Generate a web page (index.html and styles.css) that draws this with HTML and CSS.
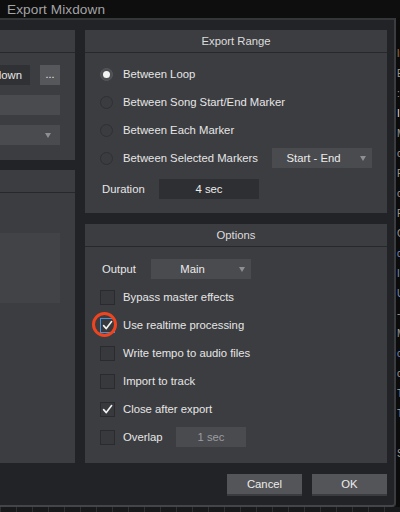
FILE: index.html
```html
<!DOCTYPE html>
<html>
<head>
<meta charset="utf-8">
<link rel="stylesheet" href="styles.css">
</head>
<body>
<div class="titlebar"><span class="title">Export Mixdown</span></div>
<div class="main">
  <div class="dialog">
    <div class="columns">
      <div class="col-left">
        <div class="panel panel-file">
          <div class="panel-head"></div>
          <div class="left-body">
            <div class="lrow"><div class="namebox">Mixdown</div><div class="dots">...</div></div>
            <div class="lrow"><div class="lfield"></div></div>
            <div class="lrow"><div class="lfield ldrop"><span class="arrow"></span></div></div>
          </div>
        </div>
        <div class="panel panel-format">
          <div class="panel-head"></div>
          <div class="lbox"></div>
        </div>
      </div>
      <div class="col-right">
        <div class="panel panel-range">
          <div class="panel-head">Export Range</div>
          <div class="range-body">
            <div class="row"><span class="radio on"></span><span class="label">Between Loop</span></div>
            <div class="row"><span class="radio"></span><span class="label">Between Song Start/End Marker</span></div>
            <div class="row"><span class="radio"></span><span class="label">Between Each Marker</span></div>
            <div class="row"><span class="radio"></span><span class="label">Between Selected Markers</span><div class="drop drop-range"><span class="drop-text">Start - End</span><span class="arrow"></span></div></div>
            <div class="row row-duration"><span class="label fixlabel dur">Duration</span><div class="darkfield">4 sec</div></div>
          </div>
        </div>
        <div class="panel panel-options">
          <div class="panel-head">Options</div>
          <div class="options-body">
            <div class="row"><span class="label fixlabel out">Output</span><div class="drop drop-out"><span class="drop-text">Main</span><span class="arrow"></span></div></div>
            <div class="row"><span class="check"></span><span class="label">Bypass master effects</span></div>
            <div class="row"><span class="check focus"><svg viewBox="0 0 15 15" width="15" height="15"><path d="M3.6 7.6 L6.3 10.6 L11.6 3.6" fill="none" stroke="#f2f2f2" stroke-width="1.6" stroke-linecap="round" stroke-linejoin="round"/></svg><span class="annot"></span></span><span class="label">Use realtime processing</span></div>
            <div class="row"><span class="check"></span><span class="label">Write tempo to audio files</span></div>
            <div class="row"><span class="check"></span><span class="label">Import to track</span></div>
            <div class="row"><span class="check"><svg viewBox="0 0 15 15" width="15" height="15"><path d="M3.6 7.6 L6.3 10.6 L11.6 3.6" fill="none" stroke="#f2f2f2" stroke-width="1.6" stroke-linecap="round" stroke-linejoin="round"/></svg></span><span class="label">Close after export</span></div>
            <div class="row"><span class="check"></span><span class="label overlap">Overlap</span><div class="field-dim">1 sec</div></div>
          </div>
        </div>
      </div>
    </div>
    <div class="footer">
      <div class="btn">Cancel</div>
      <div class="btn">OK</div>
    </div>
  </div>
  <div class="backdrop">
    <span class="bl c1">ln</span>
    <span class="bl">Ev</span>
    <span class="bl">:</span>
    <span class="bl c2">Il</span>
    <span class="bl">Mi</span>
    <span class="bl">o</span>
    <span class="bl">Fa</span>
    <span class="bl">o</span>
    <span class="bl">Fx</span>
    <span class="bl">Co</span>
    <span class="bl c3">d</span>
    <span class="bl c3">II</span>
    <span class="bl c3">U</span>
    <span class="bl">-</span>
    <span class="bl">M</span>
    <span class="bl c3">o</span>
    <span class="bl">c</span>
    <span class="bl">Ti</span>
    <span class="bl">Ti</span>
    <span class="bl">&nbsp;</span>
    <span class="bl">S</span>
  </div>
</div>
<div class="ruler"></div>
</body>
</html>
```

FILE: styles.css
```css
* { box-sizing: border-box; }

html, body {
  margin: 0;
  padding: 0;
  width: 400px;
  height: 512px;
  overflow: hidden;
  background: #121314;
  font-family: "Liberation Sans", Arial, sans-serif;
  font-size: 11.3px;
  color: #e6e6e6;
}

.titlebar {
  height: 18px;
  background: #0e0e0f;
  display: flex;
  align-items: center;
  padding-left: 7px;
}

.title {
  font-size: 13.6px;
  color: #a3a3a6;
  letter-spacing: 0.1px;
}

.main {
  display: flex;
  height: 489px;
}

.dialog {
  width: 396px;
  flex-shrink: 0;
  background: #222327;
  border-top: 2px solid #35363a;
  border-right: 2px solid #3b3c40;
  border-bottom: 2px solid #44454a;
  border-bottom-right-radius: 4px;
  padding: 10px 7px 9px 0;
  display: flex;
  flex-direction: column;
}

.columns {
  display: flex;
  gap: 10px;
  height: 433px;
}

.col-left {
  flex: 1;
  display: flex;
  flex-direction: column;
  gap: 10px;
  min-width: 0;
}

.col-right {
  width: 302px;
  flex-shrink: 0;
  display: flex;
  flex-direction: column;
  gap: 11px;
}

.panel {
  background: #3c3d41;
  overflow: hidden;
}

.panel-head {
  height: 23px;
  border-bottom: 1px solid #27282b;
  text-align: center;
  line-height: 22px;
  color: #dcdcdc;
}

/* left (cut-off) column */
.panel-file { height: 130px; }

.left-body {
  padding: 12px 15px 0 0;
  display: flex;
  flex-direction: column;
  gap: 10px;
}

.lrow {
  display: flex;
  justify-content: flex-end;
  height: 20px;
}

.namebox {
  flex-shrink: 0;
  width: 90px;
  height: 20px;
  background: #303135;
  text-align: right;
  padding-right: 8px;
  line-height: 20px;
  color: #e8e8e8;
}

.dots {
  flex-shrink: 0;
  width: 20px;
  margin-left: 10px;
  height: 20px;
  background: #56575b;
  text-align: center;
  line-height: 18px;
  color: #eeeeee;
  font-size: 10.5px;
}

.lfield {
  width: 100%;
  height: 20px;
  background: #4a4b4f;
  position: relative;
}

.ldrop {
  display: flex;
  align-items: center;
  justify-content: flex-end;
  padding-right: 3px;
}

.panel-format { flex: 1; }

.lbox {
  margin-top: 40px;
  margin-right: 15px;
  height: 70px;
  background: #424347;
}

/* right column */
.panel-range { height: 183px; }

.range-body {
  padding: 7px 15px 10px 15px;
}

.row {
  height: 28px;
  display: flex;
  align-items: center;
}

.row-duration { margin-top: 3px; }

.radio {
  width: 13px;
  height: 13px;
  border-radius: 50%;
  border: 1.5px solid #2f3033;
  background: #3b3c40;
  margin-right: 10px;
  flex-shrink: 0;
  display: flex;
  align-items: center;
  justify-content: center;
}

.radio.on {
  border-color: #56575b;
  background: #4e4f53;
}

.radio.on::after {
  content: "";
  width: 7px;
  height: 7px;
  border-radius: 50%;
  background: #f4f4f4;
}

.label {
  white-space: nowrap;
  color: #e6e6e6;
}

.fixlabel { padding-left: 2px; }
.dur { width: 59px; }
.out { width: 51px; }

.drop {
  height: 20px;
  width: 100px;
  background: #4a4b4f;
  display: flex;
  align-items: center;
  position: relative;
}

.drop-range { margin-left: auto; }

.drop-text {
  flex: 1;
  text-align: center;
  padding-left: 2px;
  color: #ececec;
}

.arrow {
  width: 0;
  height: 0;
  border-left: 3.5px solid transparent;
  border-right: 3.5px solid transparent;
  border-top: 5px solid #8e8f93;
  margin: 0 6px 0 7px;
}

.darkfield {
  width: 100px;
  height: 20px;
  background: #2e2f32;
  text-align: center;
  line-height: 20px;
  color: #ececec;
}

.panel-options { flex: 1; }

.options-body {
  padding: 8px 15px 12px 15px;
}

.check {
  width: 15px;
  height: 15px;
  border: 1px solid #2a2b2e;
  background: #38393d;
  margin-right: 8px;
  flex-shrink: 0;
  position: relative;
  display: flex;
}

.check svg {
  position: absolute;
  left: -1px;
  top: -1px;
}

.check.focus {
  border-color: #4a91d6;
}

.annot {
  position: absolute;
  left: -9px;
  top: -7px;
  width: 25px;
  height: 25px;
  border-radius: 50%;
  border: 3px solid #ee4520;
}

.overlap { width: 53px; }

.field-dim {
  width: 70px;
  height: 20px;
  background: #4a4b4f;
  text-align: center;
  line-height: 20px;
  color: #9c9da0;
}

.footer {
  margin-top: 11px;
  display: flex;
  justify-content: flex-end;
  gap: 10px;
}

.btn {
  width: 75px;
  height: 22px;
  background: #545558;
  border-bottom: 2px solid #3a3b3e;
  text-align: center;
  line-height: 20px;
  color: #ececec;
}

/* background application behind the dialog */
.backdrop {
  flex: 1;
  overflow: hidden;
  background: #0c0c0d;
  padding-top: 26px;
  display: flex;
  flex-direction: column;
  font-size: 10px;
  line-height: 20px;
  color: #9a9a9a;
}

.bl { white-space: nowrap; padding-left: 1px; }
.c1 { color: #a8763f; }
.c2 { color: #dedede; }
.c3 { color: #6f8cc0; }

.ruler {
  height: 5px;
  background-color: #18191b;
  background-image: repeating-linear-gradient(90deg, #2f3033 0 1px, transparent 1px 16px);
}
```
